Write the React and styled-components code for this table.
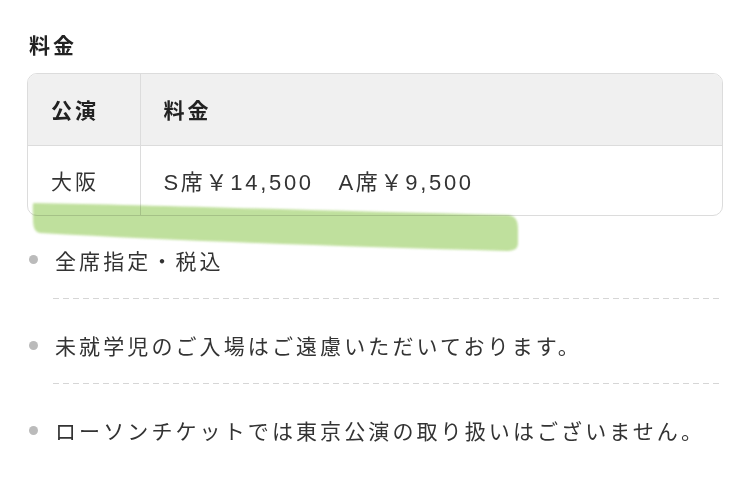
import React from 'react'
import styled, {createGlobalStyle} from 'styled-components'

const Global = createGlobalStyle`
  body {
    margin: 0;
    background: #fff;
    font-family: "Noto Sans CJK JP", "Noto Sans", sans-serif;
    color: #333;
  }
`

const Page = styled.div`
  position: relative;
  width: 750px;
  height: 484px;
  padding: 28px 27px 0 27px;
  box-sizing: border-box;
  overflow: hidden;
`

const Title = styled.h2`
  margin: 0 0 0 2px;
  font-size: 21px;
  line-height: 32px;
  letter-spacing: 3px;
  font-weight: 700;
  color: #222;
`

const TableWrap = styled.div`
  margin-top: 13px;
  border: 1px solid #dcdcdc;
  border-radius: 10px;
  overflow: hidden;
`

const Table = styled.table`
  width: 100%;
  border-collapse: collapse;
  font-size: 21px;
  letter-spacing: 3px;
`

const Th = styled.th`
  background: #f0f0f0;
  height: 71px;
  padding: 0 0 0 23px;
  width: ${({first}) => (first ? '112px' : 'auto')};
  text-align: left;
  font-weight: 700;
  color: #222;
  border-bottom: 1px solid #dcdcdc;
  border-left: ${({first}) => (first ? 'none' : '1px solid #dcdcdc')};
  box-sizing: border-box;
`

const Td = styled.td`
  height: 70px;
  padding: 0 0 0 23px;
  text-align: left;
  color: #333;
  border-left: ${({first}) => (first ? 'none' : '1px solid #dcdcdc')};
  box-sizing: border-box;
`

const Price = styled.span`
  font-family: "Liberation Sans", "Noto Sans CJK JP", sans-serif;
  font-size: 22px;
  letter-spacing: 2.7px;
`

const List = styled.ul`
  list-style: none;
  margin: 12px 0 0 0;
  padding: 0;
`

const Item = styled.li`
  position: relative;
  padding: 30px 0 23px 28px;
  font-size: 21px;
  line-height: 32px;
  letter-spacing: 3.1px;
  color: #333;
  white-space: nowrap;
  &:first-child {
    padding-top: 16px;
  }
  &:not(:last-child)::after {
    content: '';
    position: absolute;
    left: 26px;
    right: 0;
    bottom: 0;
    height: 1px;
    background: repeating-linear-gradient(to right, #d6d6d6 0 6px, transparent 6px 10px);
  }
`

const Dot = styled.span`
  position: absolute;
  left: 2px;
  top: ${({first}) => (first ? '27px' : '42px')};
  width: 9px;
  height: 9px;
  border-radius: 50%;
  background: #bbb;
`

const Marker = styled.svg`
  position: absolute;
  left: 30px;
  top: 195px;
  pointer-events: none;
  mix-blend-mode: multiply;
`

const notes = [
  '全席指定・税込',
  '未就学児のご入場はご遠慮いただいております。',
  'ローソンチケットでは東京公演の取り扱いはございません。',
]

function App() {
  return (
    <Page>
      <Global />
      <Title>料金</Title>
      <TableWrap>
        <Table>
          <thead>
            <tr>
              <Th first>公演</Th>
              <Th>料金</Th>
            </tr>
          </thead>
          <tbody>
            <tr>
              <Td first>大阪</Td>
              <Td><Price>S席￥14,500　A席￥9,500</Price></Td>
            </tr>
          </tbody>
        </Table>
      </TableWrap>
      <List>
        {notes.map((n, i) => (
          <Item key={i}>
            <Dot first={i === 0} />
            {n}
          </Item>
        ))}
      </List>
      <Marker width="500" height="64" viewBox="0 0 500 64">
        <defs>
          <filter id="soft" x="-5%" y="-20%" width="110%" height="140%">
            <feGaussianBlur stdDeviation="1.3" />
          </filter>
        </defs>
        <path
          d="M4 8 C120 10 300 16 478 20 C486 21 488 26 488 34 L488 48 C488 54 484 56 476 56 C320 52 150 46 10 38 C5 37 3 33 3 24 C3 14 2 8 4 8 Z"
          fill="#b9dd93"
          opacity="0.9"
          filter="url(#soft)"
        />
      </Marker>
    </Page>
  )
}

export default App
